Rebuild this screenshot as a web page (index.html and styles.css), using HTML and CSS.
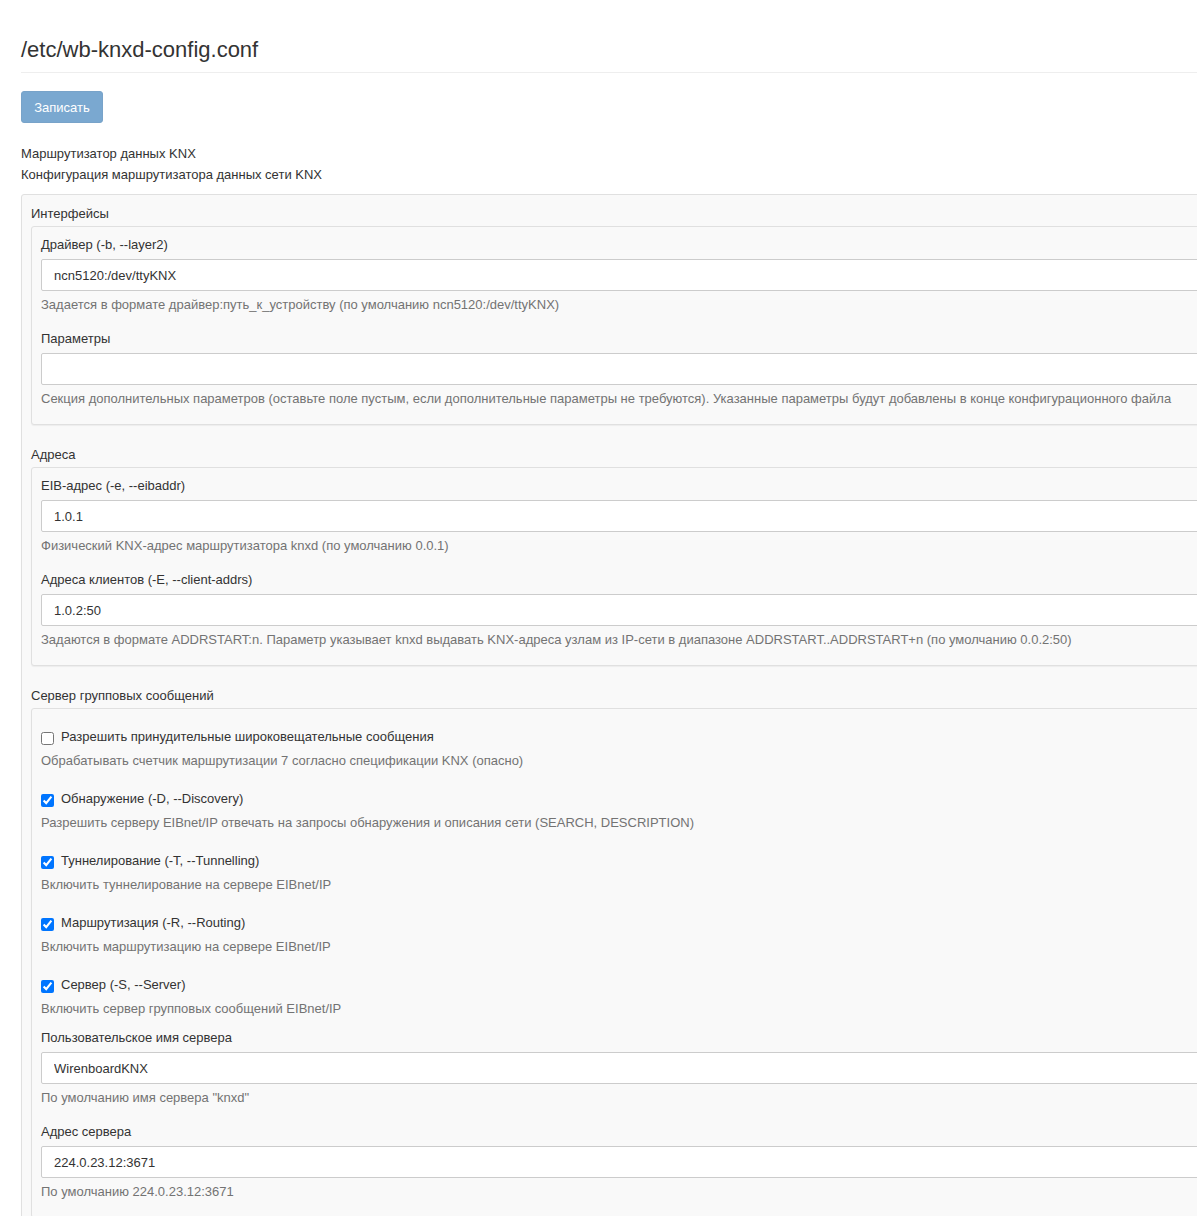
FILE: index.html
```html
<!DOCTYPE html>
<html lang="ru">
<head>
    <meta charset="UTF-8">
    <meta name="viewport" content="width=device-width, initial-scale=1.0">
    <title>/etc/wb-knxd-config.conf</title>
    <link rel="stylesheet" href="styles.css">
</head>
<body>
    <div class="page">
        <h1 class="page-title">/etc/wb-knxd-config.conf</h1>

        <button type="button" class="btn btn-save" disabled>Записать</button>

        <div class="schema-title">Маршрутизатор данных KNX</div>
        <div class="schema-desc">Конфигурация маршрутизатора данных сети KNX</div>

        <div class="well">
            <div class="group-title">Интерфейсы</div>
            <div class="well well-inner">
                <div class="form-group">
                    <label>Драйвер (-b, --layer2)</label>
                    <input type="text" class="form-control" value="ncn5120:/dev/ttyKNX">
                    <p class="help-block">Задается в формате драйвер:путь_к_устройству (по умолчанию ncn5120:/dev/ttyKNX)</p>
                </div>
                <div class="form-group">
                    <label>Параметры</label>
                    <input type="text" class="form-control" value="">
                    <p class="help-block">Секция дополнительных параметров (оставьте поле пустым, если дополнительные параметры не требуются). Указанные параметры будут добавлены в конце конфигурационного файла</p>
                </div>
            </div>

            <div class="group-title">Адреса</div>
            <div class="well well-inner">
                <div class="form-group">
                    <label>EIB-адрес (-e, --eibaddr)</label>
                    <input type="text" class="form-control" value="1.0.1">
                    <p class="help-block">Физический KNX-адрес маршрутизатора knxd (по умолчанию 0.0.1)</p>
                </div>
                <div class="form-group">
                    <label>Адреса клиентов (-E, --client-addrs)</label>
                    <input type="text" class="form-control" value="1.0.2:50">
                    <p class="help-block">Задаются в формате ADDRSTART:n. Параметр указывает knxd выдавать KNX-адреса узлам из IP-сети в диапазоне ADDRSTART..ADDRSTART+n (по умолчанию 0.0.2:50)</p>
                </div>
            </div>

            <div class="group-title">Сервер групповых сообщений</div>
            <div class="well well-inner">
                <div class="check-group">
                    <label class="checkbox"><input type="checkbox"> Разрешить принудительные широковещательные сообщения</label>
                    <p class="help-block">Обрабатывать счетчик маршрутизации 7 согласно спецификации KNX (опасно)</p>
                </div>
                <div class="check-group">
                    <label class="checkbox"><input type="checkbox" checked> Обнаружение (-D, --Discovery)</label>
                    <p class="help-block">Разрешить серверу EIBnet/IP отвечать на запросы обнаружения и описания сети (SEARCH, DESCRIPTION)</p>
                </div>
                <div class="check-group">
                    <label class="checkbox"><input type="checkbox" checked> Туннелирование (-T, --Tunnelling)</label>
                    <p class="help-block">Включить туннелирование на сервере EIBnet/IP</p>
                </div>
                <div class="check-group">
                    <label class="checkbox"><input type="checkbox" checked> Маршрутизация (-R, --Routing)</label>
                    <p class="help-block">Включить маршрутизацию на сервере EIBnet/IP</p>
                </div>
                <div class="check-group">
                    <label class="checkbox"><input type="checkbox" checked> Сервер (-S, --Server)</label>
                    <p class="help-block">Включить сервер групповых сообщений EIBnet/IP</p>
                </div>
                <div class="form-group">
                    <label>Пользовательское имя сервера</label>
                    <input type="text" class="form-control" value="WirenboardKNX">
                    <p class="help-block">По умолчанию имя сервера "knxd"</p>
                </div>
                <div class="form-group">
                    <label>Адрес сервера</label>
                    <input type="text" class="form-control" value="224.0.23.12:3671">
                    <p class="help-block">По умолчанию 224.0.23.12:3671</p>
                </div>
            </div>
        </div>
    </div>
</body>
</html>
```

FILE: styles.css
```css
* {
    margin: 0;
    padding: 0;
    box-sizing: border-box;
}

html,
body {
    overflow: hidden;
}

body {
    background-color: #fff;
    color: #333;
    font-family: "Liberation Sans", Arial, sans-serif;
    font-size: 13px;
    line-height: 20px;
}

.page {
    width: 1300px;
    padding: 38px 21px 0;
}

.page-title {
    font-size: 22px;
    font-weight: normal;
    line-height: 24px;
    padding-bottom: 10px;
    border-bottom: 1px solid #eee;
}

.btn {
    display: block;
    margin-top: 18px;
    height: 32px;
    padding: 0 12px;
    font-family: inherit;
    font-size: 13px;
    border-radius: 3px;
}

.btn-save {
    width: 82px;
    background: #7aa8d0;
    border: 1px solid #78a3c9;
    color: #fff;
}

.schema-title {
    margin-top: 20px;
    padding-top: 1px;
}

.schema-desc {
    padding-top: 1px;
}

.well {
    background: #f9f9f9;
    border: 1px solid #e0e0e0;
    border-radius: 3px;
    box-shadow: 0 1px 1px rgba(0, 0, 0, 0.05);
}

.page > .well {
    margin-top: 9px;
    padding: 8px 9px 9px;
    min-height: 1100px;
}

.group-title {
    padding-top: 1px;
    margin-bottom: 2px;
}

.well-inner {
    padding: 7px 9px 2px;
    margin-bottom: 19px;
}

.form-group {
    margin-bottom: 13px;
}

.form-group label {
    display: block;
    padding-top: 1px;
    margin-bottom: 4px;
}

.form-control {
    display: block;
    width: 100%;
    height: 32px;
    padding: 0 12px;
    border: 1px solid #ccc;
    border-radius: 2px;
    background: #fff;
    color: #333;
    font-family: inherit;
    font-size: 13px;
}

.help-block {
    margin-top: 3px;
    padding-top: 1px;
    color: #737373;
}

.check-group {
    padding-top: 10px;
    margin-bottom: 7px;
}

.check-group + .form-group {
    margin-top: 8px;
}

.checkbox {
    display: flex;
    align-items: center;
    gap: 7px;
    padding-top: 1px;
}

.checkbox input {
    width: 13px;
    height: 13px;
    margin: 2px 0 0;
}

.check-group .help-block {
    margin-top: 3px;
}
```
